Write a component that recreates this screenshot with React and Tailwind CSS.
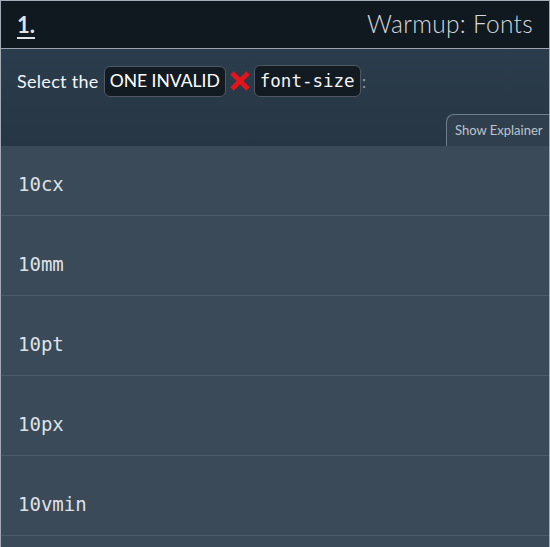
export default function App() {
  const items = ["10cx", "10mm", "10pt", "10px", "10vmin"];
  const sans = { fontFamily: "Lato, 'Open Sans', sans-serif" };
  const mono = { fontFamily: "'DejaVu Sans Mono', monospace" };
  return (
    <div className="w-[550px] h-[547px] overflow-hidden bg-[#131b22]" style={sans}>
      <div className="flex flex-col h-full border-x border-t border-[#a3abb6]">
        <div className="h-[48px] shrink-0 bg-[#111920] flex items-center justify-between pl-[16px] pr-[16px] border-b border-[#9aa4b0]">
          <span className="text-[22px] font-bold text-[#dfe3e7] underline underline-offset-[4px] decoration-2">1.</span>
          <span className="text-[24.5px] font-light text-[#d4d8dc] tracking-[0.3px]">Warmup: Fonts</span>
        </div>
        <div className="shrink-0 h-[97px] bg-gradient-to-b from-[#2b3c4c] to-[#263644] flex flex-col">
          <div className="flex items-center pl-[16px] pt-[16px] text-[18px] text-[#f2f4f6]">
            <span className="mr-[5px] tracking-[0.3px]">Select the</span>
            <span className="h-[31px] px-[5px] flex items-center rounded-[6px] border border-[#4d5863] bg-[#131b22] text-white text-[17.5px]">ONE INVALID</span>
            <svg width="22" height="22" viewBox="0 0 22 22" className="mx-[3px]">
              <path d="M3 3 L19 19 M19 3 L3 19" stroke="#e3141b" strokeWidth="4.8" strokeLinecap="butt" />
            </svg>
            <span className="h-[32px] px-[5px] flex items-center rounded-[6px] border border-[#4d5863] bg-[#131b22] text-[#f4f5f6] text-[17.5px]" style={mono}>font-size</span>
            <span className="ml-[1px] text-[#8a96a2]">:</span>
          </div>
          <div className="flex-1 flex justify-end items-end">
            <div className="h-[32px] w-[103px] rounded-tl-[8px] border-l border-t border-[#6f7e8c] bg-[#2f3f4d] flex items-center pl-[8px] text-[13px] text-[#bcc5ce] whitespace-nowrap overflow-hidden">
              Show Explainer
            </div>
          </div>
        </div>
        <div className="flex-1 bg-[#3a4a58] flex flex-col">
          {items.map((t, i) => (
            <div
              key={t}
              className={
                "shrink-0 flex items-center pl-[17px] text-[19px] text-[#dfe3e6] border-b border-[#4c5c6a] " +
                (i === 0 ? "h-[70px] pt-[8px]" : "h-[80px] pt-[18px]")
              }
              style={mono}
            >
              {t}
            </div>
          ))}
        </div>
      </div>
    </div>
  );
}
